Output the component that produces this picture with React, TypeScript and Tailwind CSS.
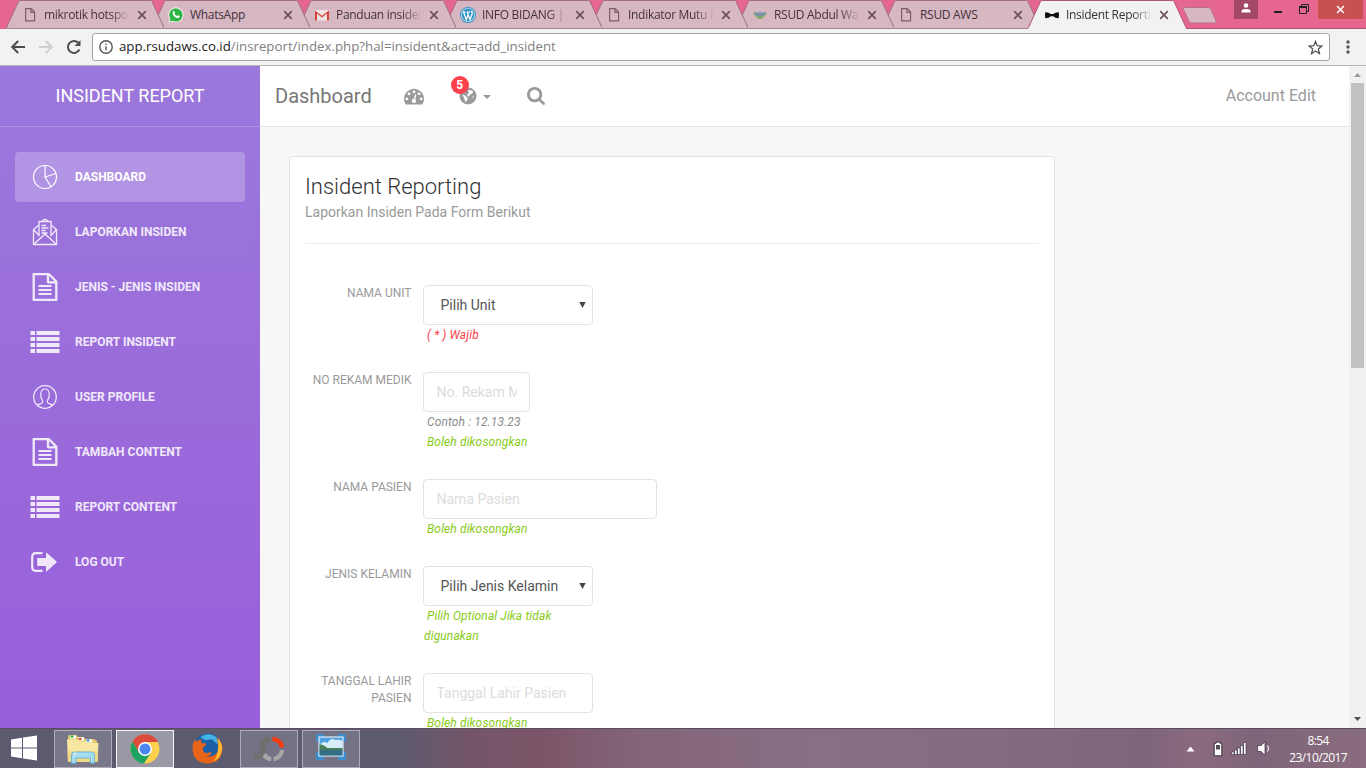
import type { ReactNode } from "react";

const FileGlyph = ({ className = "" }: { className?: string }) => (
  <svg viewBox="0 0 16 16" className={`size-4 ${className}`} fill="none" stroke="#7d5f6b" strokeWidth="1.2">
    <path d="M3.600 1.600h5.600l3.400 3.500v8.800H3.600zM8.900 1.800v3.600h3.500" />
  </svg>
);

const WhatsApp = () => (
  <svg viewBox="0 0 16 16" className="size-4">
    <path d="M.3 15.7l1-4A7.6 7.6 0 1 1 4.400 14.700z" fill="#f4eef0" />
    <path d="M1.500 14.500l.8-3A6.600 6.600 0 1 1 4.600 13.700z" fill="#2cb742" />
    <path d="M5.200 4.200c.6-.5 1-.3 1.200.2l.5 1.100c.1.400-.5.900-.5 1.100.6 1.200 1.600 2 2.700 2.500.4 0 .7-.9 1.100-.8l1.300.7c.4.200.1 1.300-.4 1.700-2.500 1.600-7.200-2.600-6.400-5.300z" fill="#fff" />
  </svg>
);

const Gmail = () => (
  <svg viewBox="0 0 16 16" className="size-4">
    <path d="M1 3h14v10.500H1z" fill="#eee4e6" />
    <path d="M1 13.500V3.400l7 5.400 7-5.400v10.100h-2V6.600l-5 4-5-4v6.900z" fill="#d5443a" />
  </svg>
);

const WordPress = () => (
  <svg viewBox="0 0 16 16" className="size-4">
    <circle cx="8" cy="8" r="8" fill="#3393c6" />
    <circle cx="8" cy="8" r="7.100" fill="#eaf0f4" />
    <circle cx="8" cy="8" r="6.400" fill="#3393c6" />
    <path d="M2.500 5.200h3M6.700 5.200h3.200M3.600 5.300l2.700 7.400 1.900-5.200M7.300 5.300l2.700 7.400 2.200-6c.3-1.300-.8-1.700-.8-2.700" fill="none" stroke="#fff" strokeWidth="1.300" />
  </svg>
);

const Lotus = () => (
  <svg viewBox="0 0 16 16" className="size-4">
    <path d="M1 5.500q3.500-.5 5 2 0-2.500 2-3.500 2 1 2 3.500 1.500-2.500 5-2-.5 3-3 4.500-1.500 1.600-4 1.800-2.500-.2-4-1.800-2.500-1.500-3-4.500z" fill="#85a97c" />
    <path d="M3 5q3 0 4.500 4Q4 8.500 3 5M13 5q-3 0-4.500 4Q12 8.500 13 5M8 4.500q1.500 2 0 4-1.500-2 0-4" fill="#6d7fcb" />
    <path d="M4.500 10q3.500 1.500 7 0-1.500 1.800-3.500 2-2-.2-3.500-2" fill="#79a84b" />
  </svg>
);

const BowTie = () => (
  <svg viewBox="0 0 16 16" className="size-4" fill="#111">
    <path d="M1.300 5.200Q4.500 5 7 7.100h2.200q2.300-2.100 5.500-1.900.8 3 0 6-3.200.2-5.500-2H7q-2.500 2.200-5.700 2-.8-3 0-6" />
  </svg>
);

const Cross = ({ className = "" }: { className?: string }) => (
  <svg viewBox="0 0 10 10" className={`size-2.5 ${className}`} fill="none" stroke="currentColor" strokeWidth="1.700">
    <path d="M1.200 1.200l7.600 7.600M8.800 1.200l-7.600 7.600" />
  </svg>
);

const tabs: { title: string; icon: ReactNode; z: string; fade?: boolean }[] = [
  { title: "mikrotik hotspot", icon: <FileGlyph />, z: "z-[7]", fade: true },
  { title: "WhatsApp", icon: <WhatsApp />, z: "z-[6]" },
  { title: "Panduan insiden", icon: <Gmail />, z: "z-[5]", fade: true },
  { title: "INFO BIDANG | R", icon: <WordPress />, z: "z-[4]", fade: true },
  { title: "Indikator Mutu R", icon: <FileGlyph />, z: "z-[3]", fade: true },
  { title: "RSUD Abdul Wah", icon: <Lotus />, z: "z-[2]", fade: true },
  { title: "RSUD AWS", icon: <FileGlyph />, z: "z-[1]" },
  { title: "Insident Reporting", icon: <BowTie />, z: "z-[8]", fade: true },
];

function TabStrip() {
  return (
    <header className="flex h-[29px] shrink-0 bg-[#e5668f] pl-[18px] font-['Open_Sans','Noto_Sans',sans-serif]">
      {tabs.map((t, i) => {
        const active = i === tabs.length - 1;
        return (
          <div key={t.title} className={`relative -ml-3 flex h-[29px] w-[158px] shrink-0 items-center pl-4 ${t.z}`}>
            <svg className="absolute inset-0" width="158" height="29" viewBox="0 0 158 29">
              <path d="M0 28.500 12.500 1.500Q13 .5 14 .5H144.500Q145.500 .5 146 1.500L158.500 28.500" fill={active ? "#f2f2f2" : "#d6b7c2"} stroke={active ? "#b25476" : "#a06c80"} />
              {active ? <path d="M0 28.500H158" stroke="#f2f2f2" /> : <path d="M0 28.500H158" stroke="#a38490" />}
            </svg>
            <span className="relative">{t.icon}</span>
            <span className={`relative ml-[6px] w-[87px] overflow-hidden text-[12px] tracking-[-0.3px] whitespace-nowrap ${active ? "text-[#333]" : "text-[#44323a]"} ${t.fade ? "[mask-image:linear-gradient(to_right,black_76%,transparent_99%)]" : ""}`}>
              {t.title}
            </span>
            <Cross className="relative ml-[6px] text-[#6b525c]" />
          </div>
        );
      })}
      <div className="flex grow items-start justify-end border-b border-[#b25476]">
        <svg width="36" height="18" viewBox="0 0 36 18" className="mt-[7px] mr-auto -ml-[4px]">
          <path d="M2.500 .5H26q2 0 2.800 1.500L34 14q.8 2-1 2H10q-2 0-2.800-1.500L1.500 2.500q-.8-2 1-2z" fill="#d6b7c2" stroke="#b96f88" />
        </svg>
        <div className="mr-4 flex h-[19px] w-6 items-center justify-center bg-[#a34868]">
          <svg viewBox="0 0 10 10" className="mb-[3px] size-[10px]" fill="#fff"><circle cx="5" cy="2.500" r="2.300" /><path d="M.5 9.500V8q0-2 4.500-2t4.500 2v1.500z" /></svg>
        </div>
        <div className="mt-[11px] mr-[17px] h-[2px] w-2 bg-[#222]" />
        <svg width="10" height="10" viewBox="0 0 10 10" className="mt-1 mr-[9px]" fill="none" stroke="#222">
          <path d="M2.500 2V.5h7v7H8M.5 2.500h7v7h-7z" /><path d="M0 3h8" strokeWidth="2" />
        </svg>
        <div className="mr-[3px] flex h-[19px] w-[45px] items-center justify-center bg-[#c75050] text-white">
          <Cross className="size-[9px]" />
        </div>
      </div>
    </header>
  );
}

function AddressBar() {
  return (
    <div className="flex h-[37px] shrink-0 items-center border-b border-[#b6b4b6] bg-[#f2f2f2] pl-[10px]">
      <svg viewBox="0 0 16 16" className="size-4" fill="none" stroke="#4d4d4d" strokeWidth="2"><path d="M15 8H2.500M8.200 2L2.200 8l6 6" /></svg>
      <svg viewBox="0 0 16 16" className="ml-3 size-4" fill="none" stroke="#d0d0d0" strokeWidth="2"><path d="M1 8h12.500M7.800 2l6 6-6 6" /></svg>
      <svg viewBox="0 0 16 16" className="ml-3 size-4" fill="none" stroke="#4d4d4d" strokeWidth="2"><path d="M13.400 10.500A6 6 0 1 1 12.400 3.900" /><path d="M14.500 1v6h-6z" fill="#4d4d4d" stroke="none" /></svg>
      <div className="ml-[10px] flex h-7 w-[1238px] items-center rounded-[3px] border border-[#a5a5a5] bg-white pr-[6px] pl-[6px]">
        <svg viewBox="0 0 14 14" className="size-[14px]" fill="none" stroke="#555" strokeWidth="1.400"><circle cx="7" cy="7" r="6.200" /><path d="M7 6.200v4M7 3.500v1.400" /></svg>
        <div className="ml-[6px] font-['Open_Sans','Noto_Sans',sans-serif] text-[13.270px] text-[#808080]">
          <span className="text-[#222]">app.rsudaws.co.id</span>/insreport/index.php?hal=insident&amp;act=add_insident
        </div>
        <svg viewBox="0 0 16 16" className="ml-auto size-[15px]" fill="none" stroke="#555" strokeWidth="1.400"><path d="M8 1.500l1.900 4.600 4.900.3-3.800 3.200 1.200 4.800L8 11.800l-4.200 2.600L5 9.600 1.200 6.400l4.900-.3z" /></svg>
      </div>
      <svg viewBox="0 0 4 14" className="ml-[16px] h-[14px] w-1" fill="#555"><circle cx="2" cy="2" r="1.700" /><circle cx="2" cy="7" r="1.700" /><circle cx="2" cy="12" r="1.700" /></svg>
    </div>
  );
}

const PieIcon = () => (
  <svg viewBox="0 0 26 26" className="size-[26px]" fill="none" stroke="currentColor" strokeWidth="1.200">
    <circle cx="13" cy="13" r="11.500" /><path d="M13 1.500V13l11-3.500M13 13l6 9.800" />
  </svg>
);
const MailIcon = () => (
  <svg viewBox="0 0 26 28" className="h-7 w-[26px]" fill="none" stroke="currentColor" strokeWidth="1.300">
    <path d="M1.500 11.500v15h23v-15L19 7M7 7l-5.500 4.500 6 6.500M24.500 11.500l-6 6.500M1.500 26.500L13 16l11.500 10.500M7 17.500V3.500h12v14M10 3.400Q13-.5 16 3.400M9.500 7.500H14M9.500 10h7M9.500 12.500h4M9.500 15h6" />
  </svg>
);
const DocIcon = () => (
  <svg viewBox="0 0 26 28" className="h-7 w-[26px]" fill="none" stroke="currentColor" strokeWidth="2">
    <path d="M1.700 1h15L24.300 8.500V27H1.700zM16 1v8.300h8" strokeWidth="2.300" strokeLinejoin="round" />
    <path d="M6.500 13h13M6.500 17h13M6.500 21h13" />
  </svg>
);
const ListIcon = () => (
  <svg viewBox="0 0 30 22" className="mb-px h-[22px] w-[30px]" fill="currentColor">
    <path d="M.5 0h4.500v4H.5zM6.500 0h23v4h-23zM.5 6h4.500v4H.5zM6.500 6h23v4h-23zM.5 12h4.500v4H.5zM6.500 12h23v4h-23zM.5 18h4.500v4H.5zM6.500 18h23v4h-23z" />
  </svg>
);
const UserIcon = () => (
  <svg viewBox="0 0 26 26" className="size-[26px]" fill="none" stroke="currentColor" strokeWidth="1.200">
    <circle cx="13" cy="13" r="11.300" />
    <path d="M5 20.800q4.500-1 5.500-2.500.5-1-.2-2.300-1.800-2-1.500-6Q9 5 13 5t4.200 5q.3 4-1.500 6-.7 1.300-.2 2.300 1 1.500 5.500 2.500" />
  </svg>
);
const LogoutIcon = () => (
  <svg viewBox="0 0 26 20" className="mr-[3px] h-5 w-[26px]" fill="currentColor">
    <path d="M11.500 1.200H5Q1.200 1.200 1.200 5v10q0 3.800 3.800 3.800h6.500" fill="none" stroke="currentColor" strokeWidth="2.200" />
    <path d="M7 6h8V1q0-1 1 0l9.300 8.300q.7.700 0 1.400L16 19q-1 1-1 0v-5H7q-.8 0-.8-.8V6.800Q6.200 6 7 6z" />
  </svg>
);

const menu: { label: string; icon: ReactNode }[] = [
  { label: "Dashboard", icon: <PieIcon /> },
  { label: "Laporkan Insiden", icon: <MailIcon /> },
  { label: "Jenis - Jenis Insiden", icon: <DocIcon /> },
  { label: "Report Insident", icon: <ListIcon /> },
  { label: "User Profile", icon: <UserIcon /> },
  { label: "Tambah Content", icon: <DocIcon /> },
  { label: "Report Content", icon: <ListIcon /> },
  { label: "Log Out", icon: <LogoutIcon /> },
];

function Sidebar() {
  return (
    <aside className="w-[260px] shrink-0 bg-linear-to-b from-[#9b78dc] to-[#995eda] text-white">
      <div className="flex h-[61px] items-center justify-center border-b border-white/20 pb-[2px] text-[18px]">INSIDENT REPORT</div>
      <nav className="flex flex-col gap-[5px] px-[15px] pt-[25px]">
        {menu.map((m, i) => (
          <a key={m.label} className={`flex h-[50px] items-center rounded-[4px] pl-[15px] text-[12px] font-bold uppercase ${i === 0 ? "bg-white/23" : "text-white/85"}`}>
            <span className="mr-[15px] flex w-[30px] justify-center">{m.icon}</span>
            {m.label}
          </a>
        ))}
      </nav>
    </aside>
  );
}

function Navbar() {
  return (
    <div className="flex h-[61px] items-center border-b border-[#e4e4e4] bg-white pr-[33px] pl-[15px] text-[#9a9a9a]">
      <span className="text-[20px] text-[#777]">Dashboard</span>
      <svg viewBox="0 0 1792 1792" className="mb-px ml-[32px] size-5" fill="currentColor">
        <path d="M384 1152q0-53-37.500-90.500t-90.500-37.500-90.500 37.500-37.500 90.500 37.500 90.500 90.500 37.500 90.500-37.500 37.500-90.500zm192-448q0-53-37.500-90.500t-90.500-37.500-90.500 37.500-37.500 90.500 37.500 90.500 90.500 37.500 90.500-37.500 37.500-90.500zm428 481l101-382q6-26-7.500-48.500t-38.500-29.500-48 6.500-30 39.500l-101 382q-60 5-107 43.500t-63 98.500q-20 77 20 146t117 89 146-20 89-117q16-60-6-117t-72-91zm660-33q0-53-37.500-90.500t-90.500-37.500-90.500 37.500-37.500 90.500 37.500 90.500 90.500 37.500 90.500-37.500 37.500-90.500zm-640-640q0-53-37.500-90.500t-90.500-37.500-90.500 37.500-37.500 90.500 37.500 90.500 90.500 37.500 90.500-37.500 37.500-90.500zm448 192q0-53-37.500-90.500t-90.500-37.500-90.500 37.500-37.500 90.500 37.500 90.500 90.500 37.500 90.500-37.500 37.500-90.500zm320 448q0 261-141 483-19 29-54 29h-1402q-35 0-54-29-141-221-141-483 0-182 71-348t191-286 286-191 348-71 348 71 286 191 191 286 71 348z" />
      </svg>
      <div className="relative ml-[35px] flex items-center">
        <svg viewBox="0 0 18 18" className="mb-px size-[18px]">
          <circle cx="9" cy="9" r="8.500" fill="#9a9a9a" />
          <path d="M3.500 7.500l2.500 1 2 1.800.8 1.700-1.500 2-.6 1.500-1-2.500-.8-2.300zM9 3l5 .8-.5 2.500-2.300 1.200-1.700 2.300-1.500-1.500L10 6z" fill="#fff" />
          <path d="M12.800 9l2-.5.5 1.500-1.300 2-.8-.9z" fill="#fff" opacity=".4" />
        </svg>
        <span className="absolute -top-[11px] -left-[8px] flex size-[18px] items-center justify-center rounded-full bg-[#fb404b] text-[12px] font-bold text-white">5</span>
        <span className="mt-[2px] ml-[6px] border-x-4 border-t-4 border-x-transparent border-t-[#9a9a9a]" />
      </div>
      <svg viewBox="0 0 1664 1664" className="ml-[36px] size-[18px]" fill="currentColor">
        <path transform="translate(-64 -128)" d="M1216 832q0-185-131.500-316.500t-316.500-131.500-316.500 131.500-131.500 316.500 131.500 316.500 316.500 131.500 316.500-131.500 131.500-316.500zm512 832q0 52-38 90t-90 38q-54 0-90-38l-343-342q-179 124-399 124-143 0-273.500-55.500t-225-150-150-225-55.500-273.500 55.500-273.500 150-225 225-150 273.500-55.500 273.500 55.500 225 150 150 225 55.500 273.500q0 220-124 399l343 343q37 37 37 90z" />
      </svg>
      <span className="ml-auto text-[16px]">Account Edit</span>
    </div>
  );
}

function Field({ label, children }: { label: string; children: ReactNode }) {
  return (
    <div className="flex gap-[11.5px] pb-[27px]">
      <div className="w-[106.5px] shrink-0 text-right text-[12px] leading-[17px] text-[#9a9a9a] uppercase">{label}</div>
      <div className="text-[12px] leading-5 tracking-[0.12px] italic">{children}</div>
    </div>
  );
}

const Select = ({ text }: { text: string }) => (
  <div className="flex h-10 w-[170px] items-center justify-between rounded-[4px] border border-[#e3e3e3] pr-[6px] pl-[16.5px] text-[14px] tracking-normal text-[#565656] not-italic">
    {text}
    <svg viewBox="0 0 7 6" className="h-[6px] w-[7px]" fill="#444"><path d="M.3 0h6.400L3.500 6z" /></svg>
  </div>
);

const Input = ({ text, width }: { text: string; width: string }) => (
  <div className={`flex h-10 items-center rounded-[4px] border border-[#e3e3e3] px-[12.5px] text-[14px] tracking-normal text-[#dcdcdc] not-italic ${width}`}>
    <span className="overflow-hidden whitespace-nowrap">{text}</span>
  </div>
);

const Optional = () => <div className="pl-1 text-[#87cb16]">Boleh dikosongkan</div>;

function ReportCard() {
  return (
    <section className="mt-[29px] ml-[29px] h-[640px] w-[766px] rounded-[4px] border border-[#e1e1e1] bg-white px-[15px] pt-[15px]">
      <h4 className="text-[22px] leading-[30px] font-light text-[#333]">Insident Reporting</h4>
      <p className="text-[14px] leading-[21px] text-[#9a9a9a]">Laporkan Insiden Pada Form Berikut</p>
      <div className="mt-5 mb-[41px] border-t border-[#ececec]" />
      <Field label="Nama Unit">
        <Select text="Pilih Unit" />
        <div className="pl-1 text-[#fb404b]">( * ) Wajib</div>
      </Field>
      <Field label="No Rekam Medik">
        <Input text="No. Rekam Medik" width="w-[107px]" />
        <div className="pl-1 text-[#8b8b8b]">Contoh : 12.13.23</div>
        <Optional />
      </Field>
      <Field label="Nama Pasien">
        <Input text="Nama Pasien" width="w-[234px]" />
        <Optional />
      </Field>
      <Field label="Jenis Kelamin">
        <Select text="Pilih Jenis Kelamin" />
        <div className="w-[150px] pl-px indent-[3px] text-[#87cb16]">Pilih Optional Jika tidak digunakan</div>
      </Field>
      <Field label="Tanggal Lahir Pasien">
        <Input text="Tanggal Lahir Pasien" width="w-[170px]" />
        <Optional />
      </Field>
    </section>
  );
}

function Scrollbar() {
  return (
    <div className="flex w-[17px] shrink-0 flex-col items-center bg-[#f1f1f1]">
      <svg viewBox="0 0 7 4" className="mt-[7px] h-1 w-[7px]" fill="#9c9c9c"><path d="M0 4L3.500 0 7 4z" /></svg>
      <div className="mt-[6px] h-[285px] w-[13px] bg-[#c1c1c1]" />
      <svg viewBox="0 0 7 4" className="mt-auto mb-[7px] h-1 w-[7px]" fill="#505050"><path d="M0 0h7L3.500 4z" /></svg>
    </div>
  );
}

const Explorer = () => (
  <svg viewBox="0 0 34 30" className="h-[30px] w-[34px]">
    <path d="M2 3q0-2 2-2h6l2 2h6l1 2h9l3 2v15H2z" fill="#e8ca6e" />
    <path d="M4 1.500h6v3H4zM12 3.500h6v3h-6zM20 5.500h6v3h-6z" fill="#fff" />
    <path d="M4.500 1.500h3v2h-3z" fill="#1fae3a" /><path d="M12.500 4h3v2h-3z" fill="#d8542f" /><path d="M20.500 5.500h3v2h-3z" fill="#3c91d8" />
    <path d="M1 5.500h10l2 2h7l1 1.500h11.500L31.500 28H2z" fill="#f7e7a3" /><path d="M1.500 17h30.500l-.5 11H2z" fill="#efd988" />
    <path d="M5.500 29.300V21q0-3 3-3h17q3 0 3 3v8.300h-4V24H10v5.300z" fill="#a6dcf1" stroke="#5aaed2" strokeWidth=".8" />
    <path d="M9 16.500l.4 3 2.600.3-2.600.3-.4 2.900-.4-2.900-2.600-.3 2.600-.3z" fill="#fff" />
  </svg>
);
const ChromeIcon = () => (
  <svg viewBox="0 0 30 30" className="size-[30px]">
    <circle cx="15" cy="15" r="14.500" fill="#fdd04e" />
    <path d="M15 8H28A14.600 14.600 0 0 0 2.500 7.500L9 18.500z" fill="#dc4b3e" />
    <path d="M2.500 7.500A14.600 14.600 0 0 0 14 29.500L21 18.500 15 22 9 18.500z" fill="#1da462" />
    <circle cx="15" cy="15" r="7" fill="#fff" /><circle cx="15" cy="15" r="5.500" fill="#4a87ee" />
  </svg>
);
const FirefoxIcon = () => (
  <svg viewBox="0 0 30 30" className="size-[31px]">
    <circle cx="15.500" cy="14" r="13.500" fill="#1c5fa6" />
    <path d="M8 4q7-5 14-1 4 3 3 8l-6-5-6 1z" fill="#43b2e4" />
    <path d="M24 4q6 5 5.500 11.500Q28.500 29 15 29.500 1 29 .5 15 .5 9 3.500 6l1 2.500Q7 5.500 9 6.500q-1 2 1 3.500 4-.5 4 1-1 2-3.500 3-.5 4.500 3.500 5.500 3-1.500 5-.5-1 3-5 3.500 8 1.500 11-5 1-7-1-13.500z" fill="#e8641b" />
    <path d="M25 5q4.500 5 4 11-1 8-8 11.500Q27.500 17 25 5z" fill="#f9bd2d" />
  </svg>
);
const PicasaRing = () => (
  <svg viewBox="0 0 34 28" className="h-7 w-[34px]" fill="none" strokeWidth="4.500">
    <path d="M20.500 4A9.500 9.500 0 0 1 30 12.500" stroke="#fb3a12" />
    <path d="M30 15a9.500 9.500 0 0 1-8.500 9M19.300 24a9.500 9.500 0 0 1-7.300-4.500" stroke="#a6a6a6" />
    <path d="M18.500 3.500Q9.500 5 10.500 13q0 9-8.500 9.500" stroke="#6f6f70" strokeWidth="5.500" />
  </svg>
);
const PhotoIcon = () => (
  <svg viewBox="0 0 30 26" className="mb-[3px] h-[26px] w-[30px]">
    <path d="M0 0h8v4H4v4H0zM22 0h8v8h-4V4h-4zM0 18h4v4h4v4H0zM26 18h4v8h-8v-4h4z" fill="#3e8ecb" />
    <path d="M2.500 2.500h25v20h-25z" fill="#fff" /><path d="M3.500 3.500h23v18h-23z" fill="#4f9fe2" />
    <path d="M3.500 11q4-5 8-2 3-6 8-3 4-1 7 1v8h-23z" fill="#d7edf8" />
    <path d="M3.500 10q5 1 8 4 8 0 15 0v3h-23z" fill="#47805a" /><path d="M3.500 16h23v5.500h-23z" fill="#346e84" />
  </svg>
);

function Taskbar() {
  const button = "flex h-[38px] w-[58px] items-center justify-center border";
  return (
    <footer className="flex h-10 shrink-0 items-center border-t border-[#5a4a62] bg-[linear-gradient(to_right,#5b5a6f_0%,#5c5b70_29%,#735568_34%,#7c5668_40%,#836579_47%,#8a6f84_60%,#836a80_75%,#80657a_84%,#8a6a7f_88%,#7f6579_92%,#896d7e_100%)] pl-[10px] text-white">
      <svg viewBox="0 0 27 26" className="mb-[2px] h-[26px] w-[27px]" fill="#fff"><path d="M1 4.500l11-1.700v9.700H1zM13 2.600L27 .5v12H13zM1 13.500h11v9.700L1 21.500zM13 13.500h14v12l-14-2.100z" /></svg>
      <div className="ml-[17px] flex gap-1">
        <div className={`${button} border-white/40 bg-white/18`}><Explorer /></div>
        <div className={`${button} border-white/90 bg-white/38`}><ChromeIcon /></div>
        <div className={`${button} border-transparent`}><FirefoxIcon /></div>
        <div className={`${button} border-white/40 bg-white/15`}><PicasaRing /></div>
        <div className={`${button} border-white/40 bg-white/15`}><PhotoIcon /></div>
      </div>
      <div className="ml-auto flex items-center pr-[19px]">
        <svg viewBox="0 0 9 6" className="mr-[18px] h-[6px] w-[9px]"><path d="M.5 5.500L4.500.5l4 5z" fill="#fff" /></svg>
        <svg viewBox="0 0 10 16" className="mr-2 h-4 w-[10px]"><path d="M3.200 1h3.600v1.200h2v12.600H1.200V2.200h2z" fill="#fff" stroke="#2c2330" strokeWidth=".9" /><path d="M3 4h4v4.500H3z" fill="#594a58" /></svg>
        <svg viewBox="0 0 16 13" className="mr-[10px] h-[13px] w-4"><path d="M.5 10h2.500v2.500H.5zM3.500 8H6v4.500H3.500zM6.500 6H9v6.500H6.500zM9.500 3.500H12v9H9.500zM12.500.5H15v12h-2.500z" fill="#fff" stroke="#33293a" strokeWidth=".6" /></svg>
        <svg viewBox="0 0 14 15" className="mr-[18px] h-[15px] w-[14px]"><path d="M.7 4.500H4L8 .7v13.600l-4-3.800H.7z" fill="#fff" stroke="#33293a" strokeWidth=".7" /><path d="M10.300 4.500q2.500 3 0 6" fill="none" stroke="#e6dfe5" strokeWidth="1.200" /></svg>
        <div className="text-center font-['Open_Sans','Noto_Sans',sans-serif] text-[12px] leading-[17px] tracking-[-0.6px]"><div>8:54</div><div>23/10/2017</div></div>
      </div>
    </footer>
  );
}

export default function App() {
  return (
    <div className="flex h-[768px] w-[1366px] flex-col overflow-hidden font-[Roboto,sans-serif]">
      <TabStrip />
      <AddressBar />
      <div className="flex min-h-0 flex-1">
        <Sidebar />
        <main className="min-w-0 grow overflow-hidden bg-[#f7f7f7]">
          <Navbar />
          <ReportCard />
        </main>
        <Scrollbar />
      </div>
      <Taskbar />
    </div>
  );
}
